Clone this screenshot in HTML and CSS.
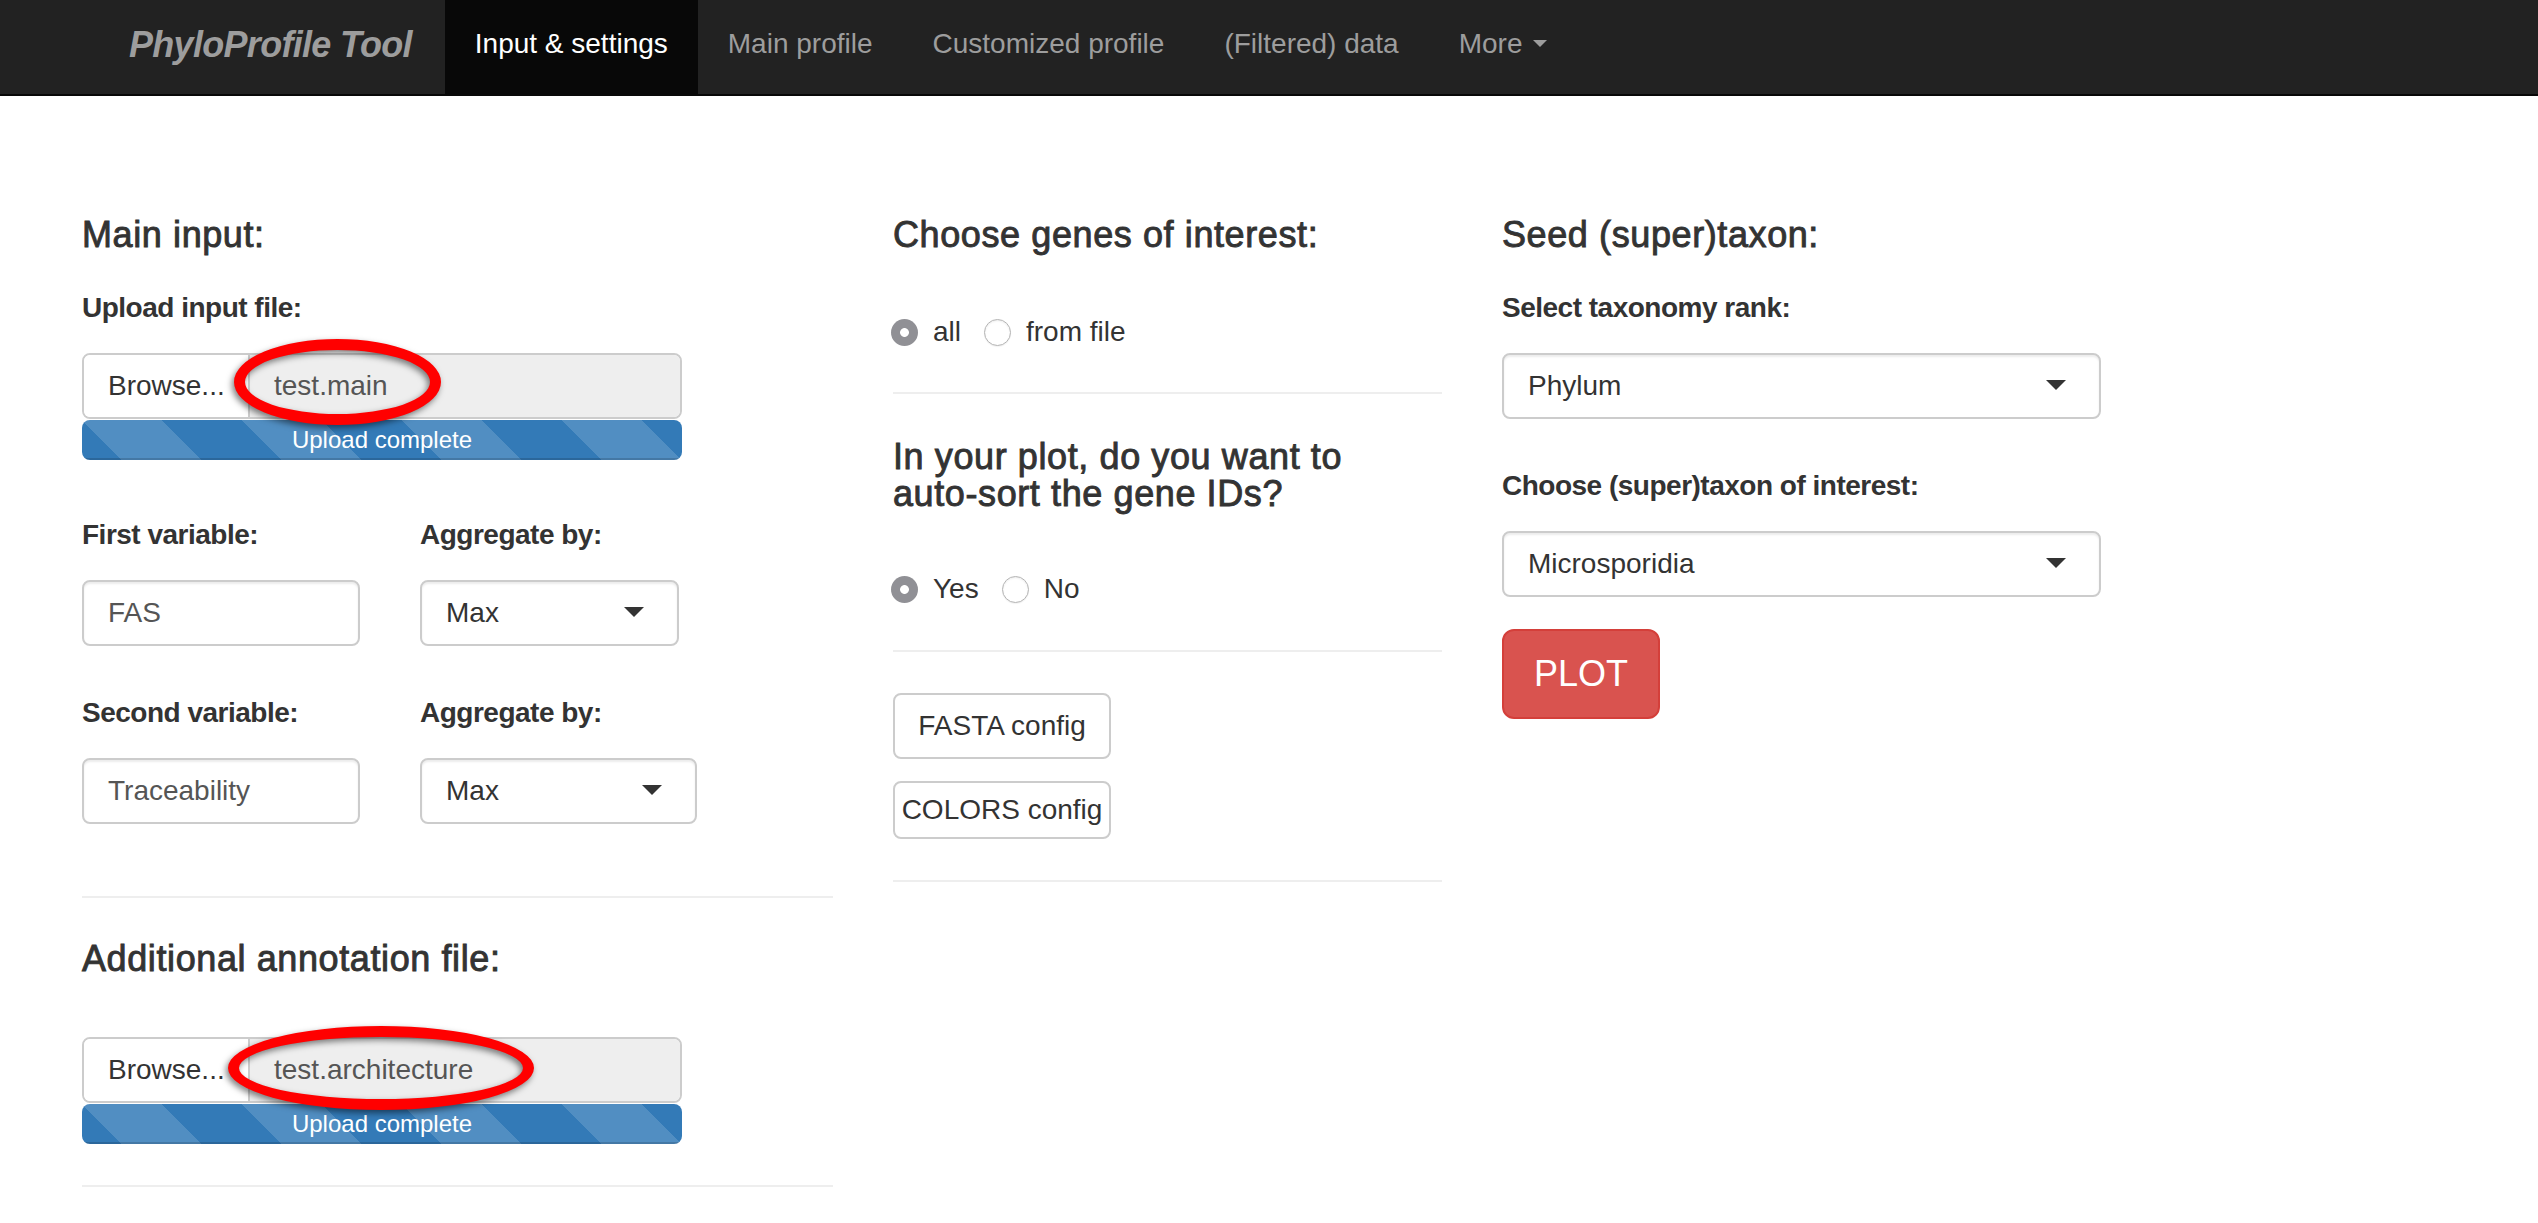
FILE: index.html
```html
<!DOCTYPE html>
<html lang="en">
<head>
<meta charset="utf-8">
<title>PhyloProfile</title>
<link rel="stylesheet" href="styles.css">
</head>
<body>
<nav class="navbar">
  <div class="navbar-inner">
    <span class="brand">PhyloProfile Tool</span>
    <ul class="nav">
      <li class="nav-item active"><a>Input &amp; settings</a></li>
      <li class="nav-item"><a>Main profile</a></li>
      <li class="nav-item"><a>Customized profile</a></li>
      <li class="nav-item"><a>(Filtered) data</a></li>
      <li class="nav-item"><a>More <b class="caret"></b></a></li>
    </ul>
  </div>
</nav>

<main class="content">
  <section class="col">
    <h4 class="heading">Main input:</h4>
    <label class="lbl lbl-first">Upload input file:</label>
    <div class="file-wrap">
      <div class="file-group">
        <span class="btn-browse">Browse...</span>
        <span class="file-name">test.main</span>
      </div>
      <span class="ring ring-main"></span>
    </div>
    <div class="progress"><div class="progress-bar">Upload complete</div></div>

    <div class="subrow subrow-1">
      <div class="subcol">
        <label class="lbl">First variable:</label>
        <div class="text-input">FAS</div>
      </div>
      <div class="subcol">
        <label class="lbl">Aggregate by:</label>
        <div class="select select-w1">Max<span class="sel-caret"></span></div>
      </div>
    </div>
    <div class="subrow subrow-2">
      <div class="subcol">
        <label class="lbl">Second variable:</label>
        <div class="text-input">Traceability</div>
      </div>
      <div class="subcol">
        <label class="lbl">Aggregate by:</label>
        <div class="select select-w2">Max<span class="sel-caret"></span></div>
      </div>
    </div>

    <hr class="rule rule-left-1">
    <h4 class="heading heading-annot">Additional annotation file:</h4>
    <div class="file-wrap file-wrap-annot">
      <div class="file-group">
        <span class="btn-browse">Browse...</span>
        <span class="file-name">test.architecture</span>
      </div>
      <span class="ring ring-annot"></span>
    </div>
    <div class="progress"><div class="progress-bar">Upload complete</div></div>
    <hr class="rule rule-left-2">
  </section>

  <section class="col">
    <h4 class="heading">Choose genes of interest:</h4>
    <div class="radio-row radio-row-1">
      <label class="radio"><span class="radio-dot checked"></span>all</label>
      <label class="radio"><span class="radio-dot"></span>from file</label>
    </div>
    <hr class="rule rule-mid-1">
    <h4 class="heading heading-sort">In your plot, do you want to <span class="nowrap">auto-sort</span> the gene IDs?</h4>
    <div class="radio-row radio-row-2">
      <label class="radio"><span class="radio-dot checked"></span>Yes</label>
      <label class="radio"><span class="radio-dot"></span>No</label>
    </div>
    <hr class="rule rule-mid-2">
    <button class="btn btn-fasta">FASTA config</button>
    <button class="btn btn-colors">COLORS config</button>
    <hr class="rule rule-mid-3">
  </section>

  <section class="col">
    <h4 class="heading">Seed (super)taxon:</h4>
    <label class="lbl lbl-first">Select taxonomy rank:</label>
    <div class="select select-wide">Phylum<span class="sel-caret"></span></div>
    <label class="lbl lbl-second">Choose (super)taxon of interest:</label>
    <div class="select select-wide">Microsporidia<span class="sel-caret"></span></div>
    <button class="btn-plot">PLOT</button>
  </section>
</main>
</body>
</html>
```

FILE: styles.css
```css
* {
  box-sizing: border-box;
}

html, body {
  margin: 0;
  padding: 0;
  background: #fff;
}

body {
  font-family: "Liberation Sans", Arial, Helvetica, sans-serif;
  font-size: 28px;
  line-height: 40px;
  color: #333;
  width: 2538px;
  min-height: 1223px;
  overflow: hidden;
}

/* ---------- navbar ---------- */
.navbar {
  height: 96px;
  background: #222;
  border-bottom: 2px solid #080808;
}

.navbar-inner {
  display: flex;
  height: 94px;
  margin-left: 99px;
}

.brand {
  display: block;
  padding: 25px 33px 0 30px;
  font-size: 36px;
  line-height: 40px;
  font-weight: bold;
  font-style: italic;
  letter-spacing: -0.7px;
  color: #9d9d9d;
}

.nav {
  display: flex;
  margin: 0;
  padding: 0;
  list-style: none;
}

.nav-item a {
  display: block;
  height: 94px;
  padding: 24px 30px 0 30px;
  line-height: 40px;
  font-size: 28px;
  color: #9d9d9d;
}

.nav-item.active a {
  background: #080808;
  color: #fff;
}

.caret {
  display: inline-block;
  width: 0;
  height: 0;
  margin-left: 3px;
  vertical-align: middle;
  border-top: 7px solid #9d9d9d;
  border-left: 7px solid transparent;
  border-right: 7px solid transparent;
  position: relative;
  top: -2px;
}

/* ---------- grid ---------- */
.content {
  display: grid;
  grid-template-columns: 811px 609px 1fr;
  padding: 120px 0 0 52px;
}

.col {
  padding: 0 30px;
  display: flex;
  flex-direction: column;
  align-items: flex-start;
}

.heading {
  margin: 0;
  font-size: 36px;
  line-height: 37px;
  font-weight: normal;
  letter-spacing: 0.6px;
  -webkit-text-stroke: 0.9px #333;
  color: #333;
}

.nowrap {
  white-space: nowrap;
}

.heading-annot {
  margin-top: 42px;
}

.heading-sort {
  margin-top: 44px;
  width: 100%;
}

.lbl {
  display: block;
  font-weight: bold;
  font-size: 28px;
  line-height: 40px;
  letter-spacing: -0.5px;
  margin-bottom: 25px;
}

.lbl-first {
  margin-top: 35px;
}

.lbl-second {
  margin-top: 47px;
}

/* ---------- file input ---------- */
.file-wrap {
  position: relative;
  width: 600px;
}

.file-wrap-annot {
  margin-top: 60px;
}

.file-group {
  display: flex;
  height: 66px;
  width: 600px;
  border: 2px solid #ccc;
  border-radius: 8px;
  overflow: hidden;
}

.btn-browse {
  display: block;
  width: 166px;
  padding: 11px 0 11px 24px;
  background: #fff;
  color: #333;
  border-right: 2px solid #ccc;
  line-height: 40px;
}

.file-name {
  flex: 1;
  display: block;
  padding: 11px 24px;
  background: #eee;
  color: #555;
  line-height: 40px;
}

.ring {
  position: absolute;
  border: 11px solid #ff0000;
  border-radius: 50%;
  filter: drop-shadow(-2px 3px 3px rgba(0, 0, 0, 0.5));
}

.ring-main {
  left: 152px;
  top: -14px;
  width: 207px;
  height: 86px;
}

.ring-annot {
  left: 146px;
  top: -11px;
  width: 306px;
  height: 84px;
}

.progress {
  width: 600px;
  height: 40px;
  margin-top: 1px;
  border-radius: 8px;
  overflow: hidden;
  background: #f5f5f5;
}

.progress-bar {
  height: 40px;
  width: 100%;
  background-color: #337ab7;
  background-image: linear-gradient(45deg,
    rgba(255, 255, 255, 0.15) 25%, transparent 25%,
    transparent 50%, rgba(255, 255, 255, 0.15) 50%,
    rgba(255, 255, 255, 0.15) 75%, transparent 75%, transparent);
  background-size: 160px 160px;
  box-shadow: inset 0 -2px 0 rgba(0, 0, 0, 0.15);
  color: #fff;
  font-size: 24px;
  line-height: 40px;
  text-align: center;
}

/* ---------- sub rows ---------- */
.subrow {
  display: grid;
  grid-template-columns: 278px 1fr;
  column-gap: 60px;
  width: 100%;
}

.subrow-1 {
  margin-top: 55px;
}

.subrow-2 {
  margin-top: 47px;
}

.text-input {
  height: 66px;
  width: 278px;
  padding: 11px 24px;
  border: 2px solid #ccc;
  border-radius: 8px;
  color: #555;
  line-height: 40px;
  box-shadow: inset 0 2px 2px rgba(0, 0, 0, 0.075);
}

.select {
  position: relative;
  height: 66px;
  padding: 11px 24px;
  border: 2px solid #ccc;
  border-radius: 8px;
  background: #fff;
  color: #333;
  line-height: 40px;
  box-shadow: inset 0 2px 2px rgba(0, 0, 0, 0.075);
}

.select-w1 {
  width: 259px;
}

.select-w2 {
  width: 277px;
}

.select-wide {
  width: 599px;
}

.sel-caret {
  position: absolute;
  right: 33px;
  top: 50%;
  margin-top: -6px;
  width: 0;
  height: 0;
  border-top: 10px solid #333;
  border-left: 10px solid transparent;
  border-right: 10px solid transparent;
}

/* ---------- rules ---------- */
.rule {
  width: 100%;
  height: 0;
  margin: 0;
  border: 0;
  border-top: 2px solid #eee;
}

.rule-left-1 { margin-top: 72px; }
.rule-left-2 { margin-top: 41px; }
.rule-mid-1 { margin-top: 40px; }
.rule-mid-2 { margin-top: 41px; }
.rule-mid-3 { margin-top: 41px; }

/* ---------- radios ---------- */
.radio-row {
  display: flex;
  align-items: center;
  height: 40px;
  margin-left: -2px;
}

.radio-row-1 {
  margin-top: 59px;
}

.radio-row-2 {
  margin-top: 57px;
}

.radio {
  display: inline-flex;
  align-items: center;
  gap: 15px;
  margin-right: 23px;
  line-height: 40px;
  color: #333;
}

.radio-dot {
  display: inline-block;
  width: 27px;
  height: 27px;
  border-radius: 50%;
  background: #fff;
  border: 1.5px solid #b4b4b4;
  box-shadow: inset 0 1px 2px rgba(0, 0, 0, 0.08), 0 1px 1px rgba(0, 0, 0, 0.05);
}

.radio-dot.checked {
  border: 0;
  background: radial-gradient(circle at center, #fff 0 4px, #909095 4.8px);
  box-shadow: none;
}

/* ---------- buttons ---------- */
.btn {
  display: block;
  width: 218px;
  margin: 0;
  font-family: "Liberation Sans", Arial, Helvetica, sans-serif;
  font-size: 28px;
  line-height: 40px;
  color: #333;
  background: #fff;
  border: 2px solid #ccc;
  border-radius: 8px;
  text-align: center;
  white-space: nowrap;
}

.btn-fasta {
  margin-top: 41px;
  padding: 11px 0;
}

.btn-colors {
  margin-top: 22px;
  padding: 7px 0;
}

.btn-plot {
  display: block;
  margin-top: 32px;
  padding: 19px 30px;
  font-family: "Liberation Sans", Arial, Helvetica, sans-serif;
  font-size: 36px;
  line-height: 48px;
  color: #fff;
  background: #d9534f;
  border: 2px solid #d43f3a;
  border-radius: 12px;
}
```
